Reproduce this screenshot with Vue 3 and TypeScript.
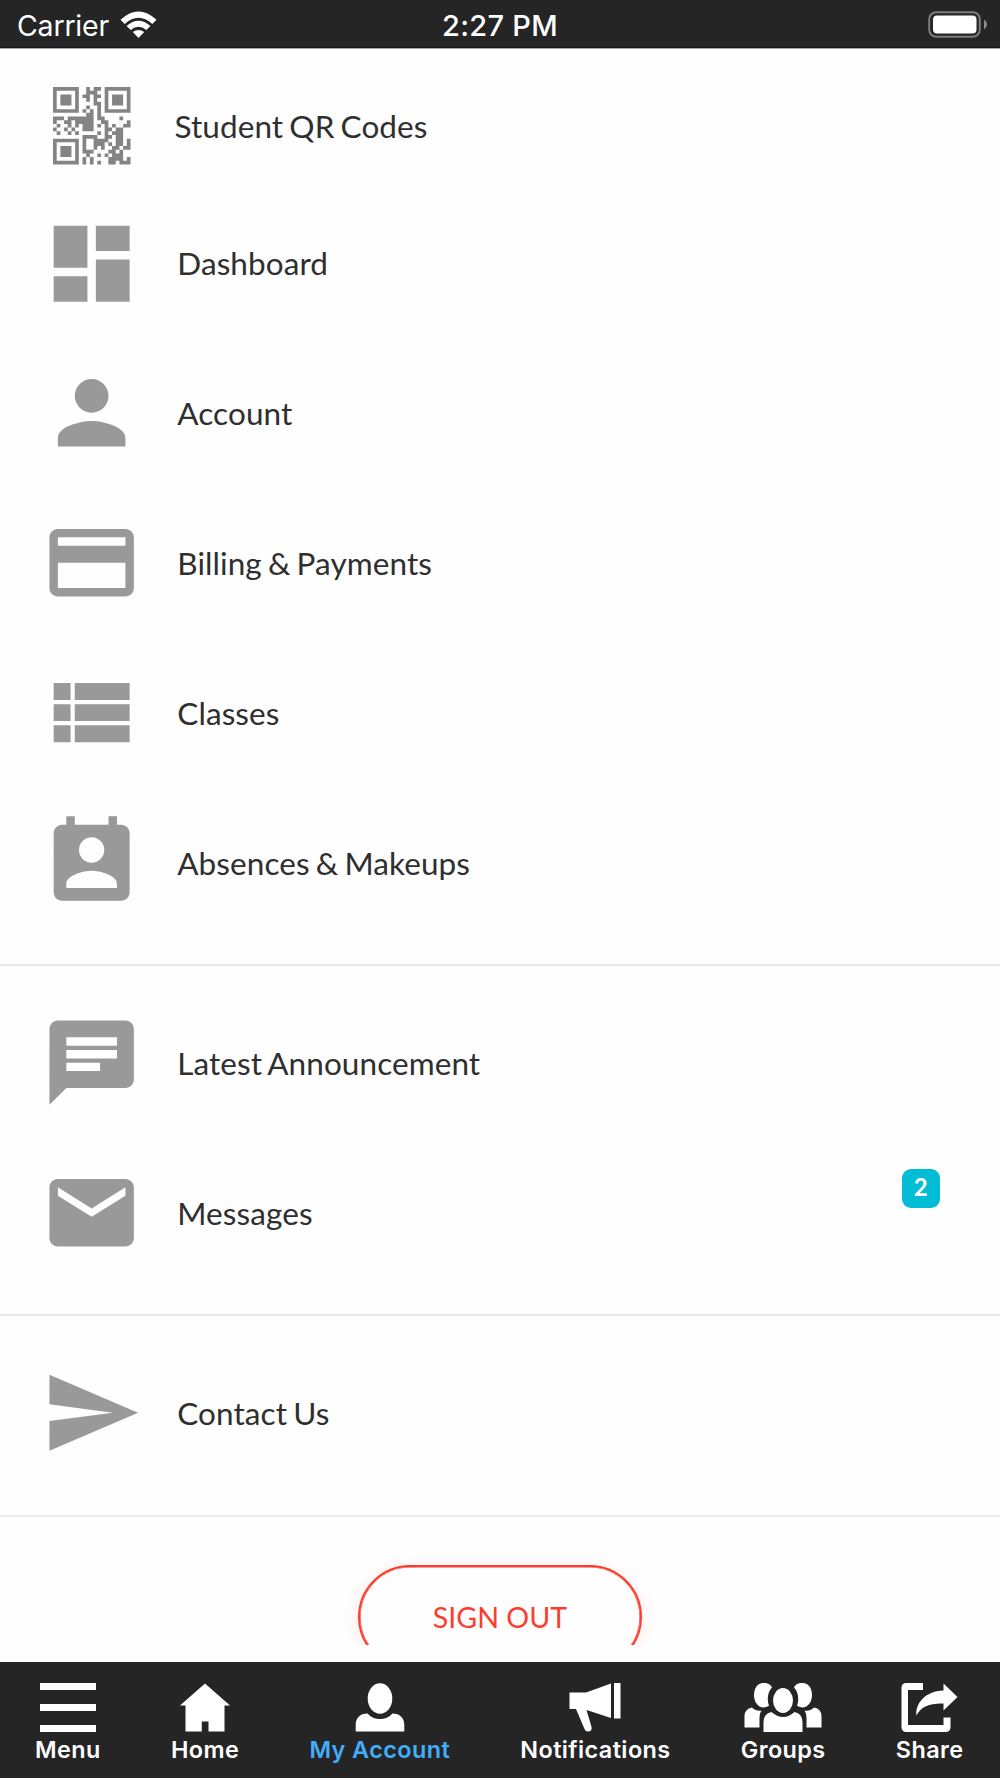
<script setup lang="ts">
interface Item {
  label: string
  icon: string
  badge?: number
}

const primary: Item[] = [
  { label: 'Dashboard', icon: 'M3 13h8V3H3v10zm0 8h8v-6H3v6zm10 0h8V11h-8v10zm0-18v6h8V3h-8z' },
  { label: 'Account', icon: 'M12 12c2.21 0 4-1.79 4-4s-1.79-4-4-4-4 1.79-4 4 1.79 4 4 4zm0 2c-2.67 0-8 1.34-8 4v2h16v-2c0-2.66-5.33-4-8-4z' },
  { label: 'Billing & Payments', icon: 'M20 4H4c-1.11 0-2 .89-2 2v12c0 1.11.89 2 2 2h16c1.11 0 2-.89 2-2V6c0-1.11-.89-2-2-2zm0 14H4v-6h16v6zm0-10H4V6h16v2z' },
  { label: 'Classes', icon: 'M3 14h4v-4H3v4zm0 5h4v-4H3v4zM3 9h4V5H3v4zm5 5h13v-4H8v4zm0 5h13v-4H8v4zM8 5v4h13V5H8z' },
  { label: 'Absences & Makeups', icon: 'M19 3h-1V1h-2v2H8V1H6v2H5c-1.11 0-2 .9-2 2v14c0 1.1.89 2 2 2h14c1.1 0 2-.9 2-2V5c0-1.1-.9-2-2-2zm-7 3c1.66 0 3 1.34 3 3s-1.34 3-3 3-3-1.34-3-3 1.34-3 3-3zm6 12H6v-1c0-2 4-3.1 6-3.1s6 1.1 6 3.1v1z' },
]
const inbox: Item[] = [
  { label: 'Latest Announcement', icon: 'M20 2H4c-1.1 0-1.99.9-1.99 2L2 22l4-4h14c1.1 0 2-.9 2-2V4c0-1.1-.9-2-2-2zM6 6h12v2H6V6zm8 8H6v-2h8v2zm4-3H6V9h12v2z' },
  { label: 'Messages', icon: 'M20 4H4c-1.1 0-2 .9-2 2v12c0 1.1.9 2 2 2h16c1.1 0 2-.9 2-2V6c0-1.1-.9-2-2-2zm0 4l-8 5-8-5V6l8 5 8-5v2z', badge: 2 },
]
const contact: Item[] = [
  { label: 'Contact Us', icon: 'M2.01 21L23 12 2.01 3 2 10l15 2-15 2z' },
]
const sections: Item[][] = [primary, inbox, contact]

const qrRows: string[] = [
  '#######..#.##.#######',
  '#.....#..###..#.....#',
  '#.###.#.##.##.#.###.#',
  '#.###.#..#.#..#.###.#',
  '#.###.#....##.#.###.#',
  '#.....#..#..#.#.....#',
  '#######.#.#.#.#######',
  '.........##.#........',
  '###.#######.##....#..',
  '#..##.#####..##.....#',
  '.#..#.#.###.#.#.#..##',
  '#..#.#..###...##.##..',
  '.#..#.#.....#.#.###..',
  '........####..##.##..',
  '#######.#..####..##.#',
  '#.....#.#..###.#.##.#',
  '#.###.#.#..#.#..##.##',
  '#.###.#.###....##.#..',
  '#.###.#..#..#.#.###..',
  '#.....#.#.#....####.#',
  '#######.#.#.#..##.###',
]
const qrPath: string = qrRows
  .map((row, y) => [...row].map((c, x) => (c === '#' ? `M${x} ${y}h1v1h-1z` : '')).join(''))
  .join('')
</script>

<template>
  <div class="screen">
    <header class="status">
      <div class="carrier">
        <span>Carrier</span>
        <svg class="wifi" width="37" height="28" viewBox="0 0 37 28">
          <path d="M0.5 8.8Q18.5-7.8 36.5 8.8L32.3 13Q18.5 0.6 4.7 13Z" />
          <path d="M6.6 15Q18.5 4.3 30.4 15L26.3 19.1Q18.5 12.6 10.7 19.1Z" />
          <path d="M12.8 21.1Q18.5 16.7 24.2 21.1L18.5 27Z" />
        </svg>
      </div>
      <span class="time">2:27 PM</span>
      <svg class="battery" width="60" height="28" viewBox="0 0 60 28">
        <rect x="1.2" y="1.2" width="50.6" height="24.6" rx="7" fill="none" stroke="#7c7c7c" stroke-width="2" />
        <rect x="5" y="4.5" width="43.5" height="18" rx="4" fill="#fff" />
        <path d="M56 8.5Q59 10.5 59 13.5T56 18.5Z" fill="#8c8c8c" />
      </svg>
    </header>

    <main class="content">
      <a class="row qr-row">
        <svg class="qr" viewBox="0 0 21 21"><path :d="qrPath" /></svg>
        <span class="label">Student QR Codes</span>
      </a>
      <section v-for="(items, i) in sections" :key="i" class="section">
        <a v-for="item in items" :key="item.label" class="row">
          <svg class="icon" viewBox="0 0 24 24"><path :d="item.icon" /></svg>
          <span class="label">{{ item.label }}</span>
          <span v-if="item.badge" class="badge">{{ item.badge }}</span>
        </a>
      </section>
      <div class="signout-wrap">
        <button class="signout">SIGN OUT</button>
      </div>
    </main>

    <nav class="tabs">
      <a class="tab">
        <svg width="56" height="49" viewBox="0 0 56 49"><path d="M0 0h56v7H0zM0 21h56v7H0zM0 42h56v7H0z" /></svg>
        <span>Menu</span>
      </a>
      <a class="tab">
        <svg width="50" height="49" viewBox="0 0 50 49"><path d="M25 0.5L50 22.5H44.5V48.5H28.5V38.5H21.8V48.5H5.5V22.5H0Z" /></svg>
        <span>Home</span>
      </a>
      <a class="tab active">
        <svg width="50" height="49" viewBox="0 0 50 49">
          <ellipse cx="25" cy="15.5" rx="12.3" ry="15.3" />
          <path d="M0.7 48.5V42C0.7 35 5 30.5 12.5 30.5C16 34.2 20 36 25 36S34 34.2 37.5 30.5C45 30.5 49.3 35 49.3 42V48.5Z" />
        </svg>
        <span>My Account</span>
      </a>
      <a class="tab">
        <svg width="52" height="49" viewBox="0 0 52 49">
          <path d="M0.5 9.5H17L42 0.5V35L17.5 27L22.7 44.5Q23 48.5 19 48.5Q16.5 48.5 15.5 46L7 26H0.5ZM45 0H51.5V35.5H45Z" />
        </svg>
        <span>Notifications</span>
      </a>
      <a class="tab">
        <svg width="78" height="49" viewBox="0 0 78 49">
          <path d="M28 4.5C25.5-1.5 15-2 11.5 5C7.5 14 12 24.5 19.5 24.5Q22 24.5 25 22.7C22.5 16 24 8.5 28 4.5ZM50 4.5C52.5-1.5 63-2 66.5 5C70.5 14 66 24.5 58.5 24.5Q56 24.5 53 22.7C55.5 16 54 8.5 50 4.5Z" />
          <path d="M0.5 44.5V33Q0.5 26 8 24.5Q12 28.5 17.5 27.7C15 31 15.5 35 15.5 44.5ZM77.5 44.5V33Q77.5 26 70 24.5Q66 28.5 60.5 27.7C63 31 62.5 35 62.5 44.5Z" />
          <ellipse cx="39" cy="17.5" rx="10" ry="12.5" />
          <path d="M19.5 49V39Q19.5 30.5 27.5 29Q33 34 39 34T50.5 29Q58.5 30.5 58.5 39V49Z" />
        </svg>
        <span>Groups</span>
      </a>
      <a class="tab">
        <svg width="57" height="49" viewBox="0 0 57 49">
          <path d="M22 0V7H7V42H42.5V34.5H49.5V44Q49.5 49 44.5 49H5.5Q0.5 49 0.5 44V5Q0.5 0 5.5 0Z" />
          <path d="M42.5 0.5L56.5 14L42.5 27.5V20.5C30 20 20 23 15.5 32.5C14 22 23 8 42.5 7.5Z" />
        </svg>
        <span>Share</span>
      </a>
    </nav>
  </div>
</template>

<style>
body {
  background: #fefefe;
}
</style>

<style scoped>
.screen {
  width: 1000px;
  height: 1778px;
  display: flex;
  flex-direction: column;
  background: #fefefe;
  overflow: hidden;
}
.status {
  flex: none;
  height: 49px;
  box-sizing: border-box;
  border-bottom: 1px solid #a8a8a8;
  box-shadow: inset 0 -1px 0 #151515;
  background: #252525;
  color: #fff;
  display: grid;
  grid-template-columns: 1fr auto 1fr;
  align-items: center;
  padding: 2px 12px 0;
  font: 400 28.5px/32px Inter, sans-serif;
}
.carrier {
  display: flex;
  align-items: center;
  gap: 11px;
  padding-left: 5px;
  letter-spacing: -0.2px;
}
.carrier span,
.time {
  padding-top: 1px;
}
.wifi {
  fill: #fff;
}
.time {
  font-size: 29px;
  font-weight: 500;
  letter-spacing: 0.3px;
}
.battery {
  justify-self: end;
}
.content {
  flex: none;
  height: 1596px;
  overflow: hidden;
}
.row {
  display: flex;
  align-items: center;
  height: 149.8px;
  padding-left: 41.3px;
}
.qr-row {
  height: 139.4px;
  padding: 15px 0 0 53px;
  box-sizing: border-box;
}
.qr {
  width: 77.5px;
  height: 77.5px;
  fill: #848484;
}
.icon {
  width: 101.3px;
  height: 101.3px;
  fill: #999;
  flex: none;
}
.label {
  margin-left: 34.7px;
  padding-top: 0.4px;
  font: 400 31.5px/40px Lato, sans-serif;
  letter-spacing: 0.08px;
  word-spacing: -2px;
  color: #2f2f2f;
}
.qr-row .label {
  margin-left: 44px;
  padding-top: 0;
}
.section {
  border-bottom: 2px solid #e5eaed;
  padding: 21.7px 0 26.8px;
}
.section:first-of-type {
  padding-top: 0;
}
.badge {
  width: 38px;
  height: 39px;
  margin: 0 60.3px 48px auto;
  border-radius: 9px;
  background: #00bcd4;
  color: #fff;
  font: 700 24px/36px Lato, sans-serif;
  text-align: center;
}
.signout-wrap {
  display: flex;
  justify-content: center;
  padding-top: 48.5px;
}
.signout {
  width: 284px;
  height: 104px;
  box-sizing: border-box;
  padding: 0;
  border: 2px solid #fb3d2e;
  border-radius: 52px;
  background: #fefefe;
  box-shadow: inset 0 0 0 0.6px #fb3d2e, 0 3px 16px rgba(251, 61, 46, 0.12);
  color: #fb3d2e;
  font: 400 28.6px/40px Lato, sans-serif;
}
.tabs {
  margin-top: auto;
  height: 116px;
  box-sizing: border-box;
  padding: 20.7px 1.5px 0 0;
  background: #252525;
  display: flex;
  justify-content: center;
  gap: 70.2px;
}
.tab {
  display: flex;
  flex-direction: column;
  align-items: center;
  color: #fff;
  font: 600 23.4px/30px Inter, sans-serif;
  letter-spacing: 0.42px;
}
.tab svg {
  fill: #fff;
  flex: none;
}
.tab span {
  margin-top: 3px;
}
.tab.active {
  color: #42adf8;
}
</style>
